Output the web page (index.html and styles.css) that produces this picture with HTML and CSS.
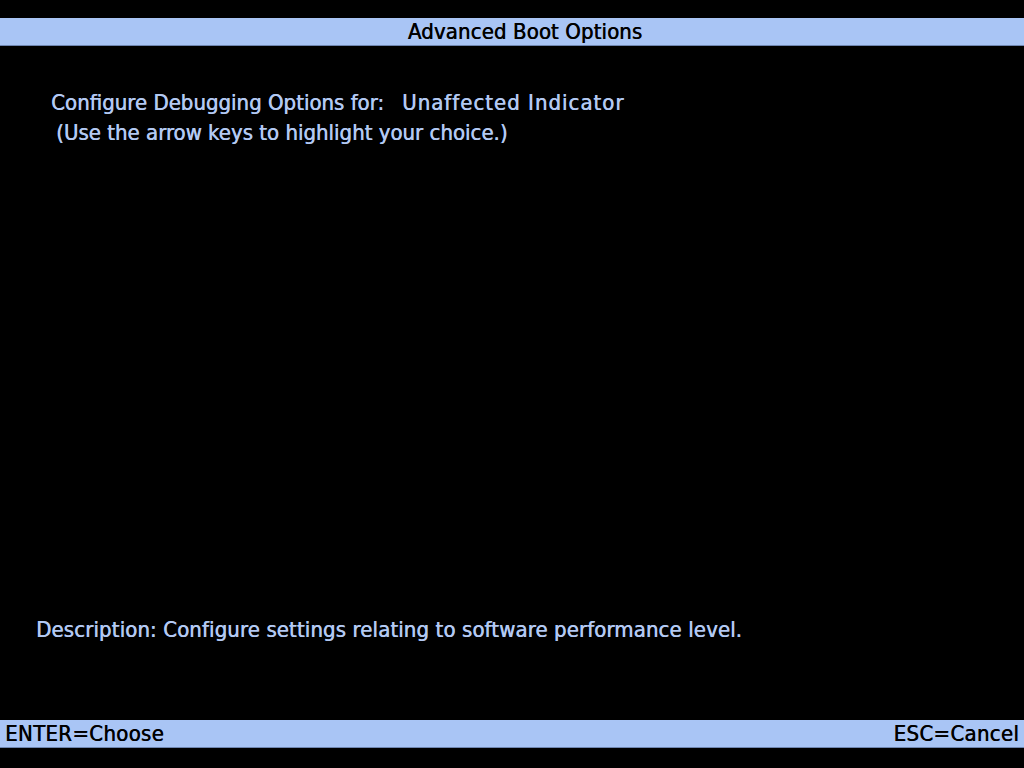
FILE: index.html
```html
<!DOCTYPE html>
<html>
<head>
<meta charset="utf-8">
<link rel="stylesheet" href="styles.css">
<title>Advanced Boot Options</title>
</head>
<body>
<div class="screen">
  <header class="bar title-bar"><span>Advanced Boot Options</span></header>
  <main class="main">
    <div class="prompt">
      <div class="line1"><span class="label">Configure Debugging Options for:</span><span class="value">Unaffected Indicator</span></div>
      <div class="line2">(Use the arrow keys to highlight your choice.)</div>
    </div>
    <div class="description">Description: Configure settings relating to software performance level.</div>
  </main>
  <footer class="bar footer-bar"><span>ENTER=Choose</span><span>ESC=Cancel</span></footer>
</div>
</body>
</html>
```
FILE: styles.css
```css
html, body {
  margin: 0;
  padding: 0;
  background: #000;
}
.screen {
  width: 1024px;
  height: 768px;
  display: flex;
  flex-direction: column;
  font-family: "DejaVu Sans Condensed", "Liberation Sans", sans-serif;
  font-size: 22px;
  font-weight: normal;
  color: #b3c9f2;
  text-shadow: 0.5px 0 0 currentColor;
}
.bar {
  background: #a9c5f5;
  color: #000;
  height: 27px;
  border-bottom: 1px solid #6f86b0;
  display: flex;
  align-items: center;
  line-height: 1;
}
.title-bar {
  margin-top: 18px;
  justify-content: center;
  padding-left: 26px;
  letter-spacing: 0.1px;
}
.main {
  flex: 1;
  display: flex;
  flex-direction: column;
  justify-content: space-between;
}
.prompt {
  padding: 42px 0 0 51px;
}
.line1 {
  display: flex;
  gap: 18px;
  line-height: 30px;
}
.value {
  letter-spacing: 1px;
}
.line2 {
  padding-left: 5px;
  line-height: 29px;
}
.description {
  padding: 0 0 75px 36px;
  line-height: 30px;
  letter-spacing: 0.1px;
}
.footer-bar {
  justify-content: space-between;
  padding: 0 5px;
  margin-bottom: 20px;
  letter-spacing: 0.3px;
}
```
